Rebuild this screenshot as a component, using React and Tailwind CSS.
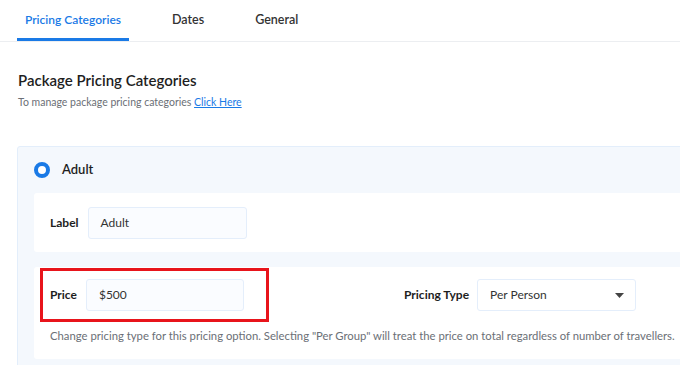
export default function App() {
  return (
    <div
      className="h-[365px] w-[680px] overflow-hidden bg-white text-[#1e1e1e]"
      style={{ fontFamily: 'Lato, "Noto Sans", sans-serif' }}
    >
      <div className="flex h-[42px] items-end border-b border-[#eceef1] pl-[17px]">
        <div className="flex h-[42px] w-[112px] items-center justify-center border-b-[3px] border-[#1a7ae6] pt-[3px] text-[12px] font-semibold text-[#1a7ae6]">
          Pricing Categories
        </div>
        <div className="ml-[43px] flex h-[42px] items-center pt-[1px] text-[12.5px] font-semibold text-[#333]">
          Dates
        </div>
        <div className="ml-[51px] flex h-[42px] items-center pt-[1px] text-[12.5px] font-semibold text-[#333]">
          General
        </div>
      </div>

      <div className="pl-[18px] pt-[28px]">
        <h1 className="text-[15px] font-semibold leading-[20px] text-[#1e1e1e]">Package Pricing Categories</h1>
        <p className="mt-[5px] text-[10.5px] leading-[14px] text-[#6b6f76]">
          To manage package pricing categories{' '}
          <a href="#" className="text-[#1a7ae6] underline">
            Click Here
          </a>
        </p>
      </div>

      <div className="ml-[17px] mt-[37px] w-[720px] rounded-[3px] border border-[#e3eefb] bg-[#f4f8fd] pb-[10px] pl-[16px]">
        <div className="flex h-[46px] items-center">
          <span className="h-[16px] w-[16px] rounded-full border-[4px] border-[#1a7ae6] bg-white"></span>
          <span className="ml-[12px] text-[13px] font-semibold text-[#1e1e1e]">Adult</span>
        </div>

        <div className="flex h-[59px] items-center rounded-[3px] bg-white pl-[16px]">
          <span className="text-[12px] font-bold text-[#1e1e1e]">Label</span>
          <div className="ml-[9px] flex h-[32px] w-[159px] items-center rounded-[3px] border border-[#e4eefb] bg-[#fafcff] pl-[12px] text-[12px] text-[#333]">
            Adult
          </div>
        </div>

        <div className="mt-[15px] rounded-[3px] bg-white pb-[14px] pt-[1px]">
          <div className="flex items-center">
            <div className="ml-[6px] flex h-[54px] w-[229px] items-center border-[3px] border-[#e8141b] pl-[7px]">
              <span className="text-[12px] font-bold text-[#1e1e1e]">Price</span>
              <div className="ml-[9px] flex h-[32px] w-[158px] items-center rounded-[3px] border border-[#e4eefb] bg-[#fafcff] pl-[12px] text-[12px] text-[#333]">
                $500
              </div>
            </div>
            <span className="ml-[135px] text-[12px] font-bold text-[#1e1e1e]">Pricing Type</span>
            <div className="ml-[8px] flex h-[32px] w-[159px] items-center justify-between rounded-[3px] border border-[#e4eefb] bg-white pl-[12px] pr-[11px] text-[12px] text-[#333]">
              <span>Per Person</span>
              <svg width="9" height="5" viewBox="0 0 9 5">
                <path d="M0 0h9L4.5 5z" fill="#444" />
              </svg>
            </div>
          </div>
          <p className="ml-[16px] mt-[6px] whitespace-nowrap text-[11.3px] text-[#6b6f76]">
            Change pricing type for this pricing option. Selecting "Per Group" will treat the price on total regardless of number of travellers.
          </p>
        </div>
      </div>
    </div>
  )
}
